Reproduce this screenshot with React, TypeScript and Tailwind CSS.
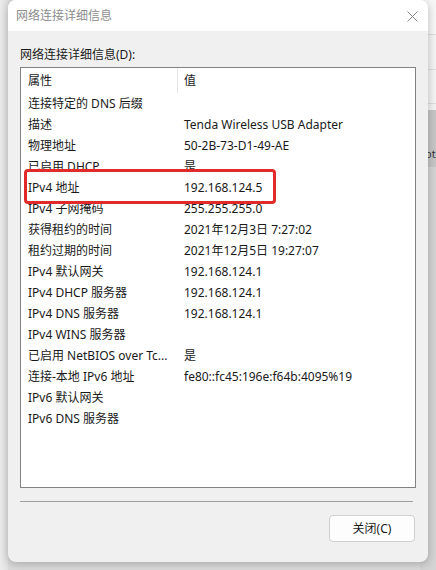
import React from "react"

const rows: [string, string][] = [
  ["连接特定的 DNS 后缀", ""],
  ["描述", "Tenda Wireless USB Adapter"],
  ["物理地址", "50-2B-73-D1-49-AE"],
  ["已启用 DHCP", "是"],
  ["IPv4 地址", "192.168.124.5"],
  ["IPv4 子网掩码", "255.255.255.0"],
  ["获得租约的时间", "2021年12月3日 7:27:02"],
  ["租约过期的时间", "2021年12月5日 19:27:07"],
  ["IPv4 默认网关", "192.168.124.1"],
  ["IPv4 DHCP 服务器", "192.168.124.1"],
  ["IPv4 DNS 服务器", "192.168.124.1"],
  ["IPv4 WINS 服务器", ""],
  ["已启用 NetBIOS over Tc...", "是"],
  ["连接-本地 IPv6 地址", "fe80::fc45:196e:f64b:4095%19"],
  ["IPv6 默认网关", ""],
  ["IPv6 DNS 服务器", ""],
]

const font = { fontFamily: '"Noto Sans", "Noto Sans CJK SC", sans-serif' }

export default function App() {
  return (
    <div className="relative w-[436px] h-[570px] overflow-hidden bg-[#dcdcdc] text-[12px] text-[#1a1a1a]" style={font}>
      {/* desktop behind */}
      <div className="absolute left-0 top-0 w-[8px] h-full bg-gradient-to-r from-[#ececec] to-[#e2e2e2]" />
      <div className="absolute left-[420px] top-0 w-[16px] h-full flex flex-col bg-[#d4d4d4]">
        <div className="h-[35px] bg-[#f7f7f7] border-b border-[#dedede]" />
        <div className="h-[35px] bg-[#f4f4f4] border-b border-[#dedede]" />
        <div className="h-[34px] bg-[#f4f4f4] border-b border-[#dedede]" />
        <div className="h-[6px] bg-[#f4f4f4]" />
        <div className="h-[57px] bg-[#c6c6c6] relative overflow-hidden">
          <span className="absolute left-[5px] top-[36px] text-[11px] text-[#333]">ot</span>
        </div>
      </div>

      {/* dialog */}
      <div className="absolute left-[8px] top-0 w-[420px] h-[562px] rounded-[8px] bg-[#f0f0f0] shadow-[0_2px_10px_rgba(0,0,0,0.25)] flex flex-col overflow-hidden">
        <div className="h-[31px] bg-white flex items-center justify-between pl-[8px] pr-[10px] shrink-0">
          <span className="text-[#8c8c8c] text-[12px]">网络连接详细信息</span>
          <svg width="11" height="11" viewBox="0 0 11 11" className="mt-[1px]">
            <path d="M0.5 0.5 L10.5 10.5 M10.5 0.5 L0.5 10.5" stroke="#8a8a8a" strokeWidth="1" fill="none" />
          </svg>
        </div>

        <div className="flex flex-col pl-[12px] pr-[13px] pt-[16px]">
          <div className="h-[16px] leading-[16px]">网络连接详细信息(D):</div>

          <div className="relative mt-[4px] h-[421px] w-[396px] border border-[#828282] bg-white">
            <div className="flex h-[25px] items-center">
              <div className="w-[156px] pl-[7px]">属性</div>
              <div className="w-px h-[25px] bg-[#e5e5e5]" />
              <div className="pl-[6px]">值</div>
            </div>
            {rows.map(([k, v], i) => (
              <div key={i} className="flex h-[21px] items-center whitespace-nowrap">
                <div className="w-[157px] pl-[7px] overflow-hidden">{k}</div>
                <div className="pl-[6px]">{v}</div>
              </div>
            ))}
            <div className="absolute left-[3px] top-[101px] w-[252px] h-[35px] border-[3px] border-[#e12b2b] rounded-[4px]" />
          </div>

          <div className="mt-[13px] h-px w-[393px] bg-[#a0a0a0]" />

          <div className="flex justify-end mt-[13px] pr-0">
            <button className="w-[86px] h-[27px] rounded-[4px] bg-[#fdfdfd] border border-[#d0d0d0] text-[12px] text-[#1a1a1a]">
              关闭(C)
            </button>
          </div>
        </div>
      </div>
    </div>
  )
}
